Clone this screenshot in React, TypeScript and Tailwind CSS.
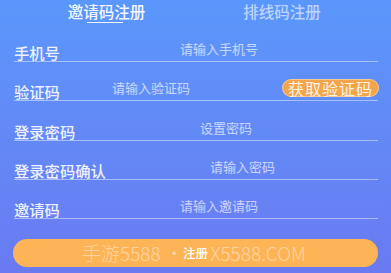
import React from "react";

const rows: { label: string; ph: string; phLeft: number; code?: boolean }[] = [
  { label: "手机号", ph: "请输入手机号", phLeft: 166 },
  { label: "验证码", ph: "请输入验证码", phLeft: 98, code: true },
  { label: "登录密码", ph: "设置密码", phLeft: 186 },
  { label: "登录密码确认", ph: "请输入密码", phLeft: 196 },
  { label: "邀请码", ph: "请输入邀请码", phLeft: 166 },
];

export default function App() {
  return (
    <div
      className="relative w-[391px] h-[273px] overflow-hidden bg-gradient-to-b from-[#5a97fb] to-[#6a7af1] text-white"
      style={{ fontFamily: '"Noto Sans CJK SC", "Noto Sans", sans-serif' }}
    >
      <div className="flex px-[14px] h-[23px]">
        <div className="w-[185px] flex flex-col items-center">
          <div className="text-[15.5px] leading-[15px] mt-[4px] text-[#f4f7ff] font-medium">邀请码注册</div>
          <div className="mt-[3px] w-[36px] h-[2px] bg-white/90 -ml-[3px]" />
        </div>
        <div className="w-[166px] flex flex-col items-center">
          <div className="text-[15.5px] leading-[15px] mt-[4px] text-white/60 font-medium">排线码注册</div>
        </div>
      </div>
      <div className="mx-[14px] w-[364px]">
        {rows.map((r) => (
          <div key={r.label} className="relative h-[39.2px] border-b border-white/45 flex items-end">
            <div className="text-[15.3px] leading-[15px] mb-[1px] font-medium text-[#eef2ff]">{r.label}</div>
            <div
              className="absolute bottom-[6px] text-[13px] leading-[13px] text-white/65"
              style={{ left: r.phLeft }}
            >
              {r.ph}
            </div>
            {r.code && (
              <div className="absolute right-[-1px] bottom-[3px] h-[18px] rounded-full bg-[#f2a54a] border border-white/40 px-[5px] flex items-center text-[16px] leading-[16px] text-[#fff4e4] tracking-[1px]">
                获取验证码
              </div>
            )}
          </div>
        ))}
      </div>
      <div className="relative mx-[13px] mt-[20px] h-[28px] rounded-full bg-[#fdb456] flex items-center justify-center">
        <span className="text-[12.5px] text-white font-medium">注册</span>
        <div
          className="absolute left-[69px] top-[2px] text-[19px] leading-[24px] text-white/45 whitespace-nowrap"
          style={{ fontWeight: 300 }}
        >
          手游5588 •
        </div>
        <div
          className="absolute right-[72px] top-[2px] text-[19px] leading-[24px] text-white/45 whitespace-nowrap"
          style={{ fontWeight: 300 }}
        >
          X5588.COM
        </div>
      </div>
    </div>
  );
}
